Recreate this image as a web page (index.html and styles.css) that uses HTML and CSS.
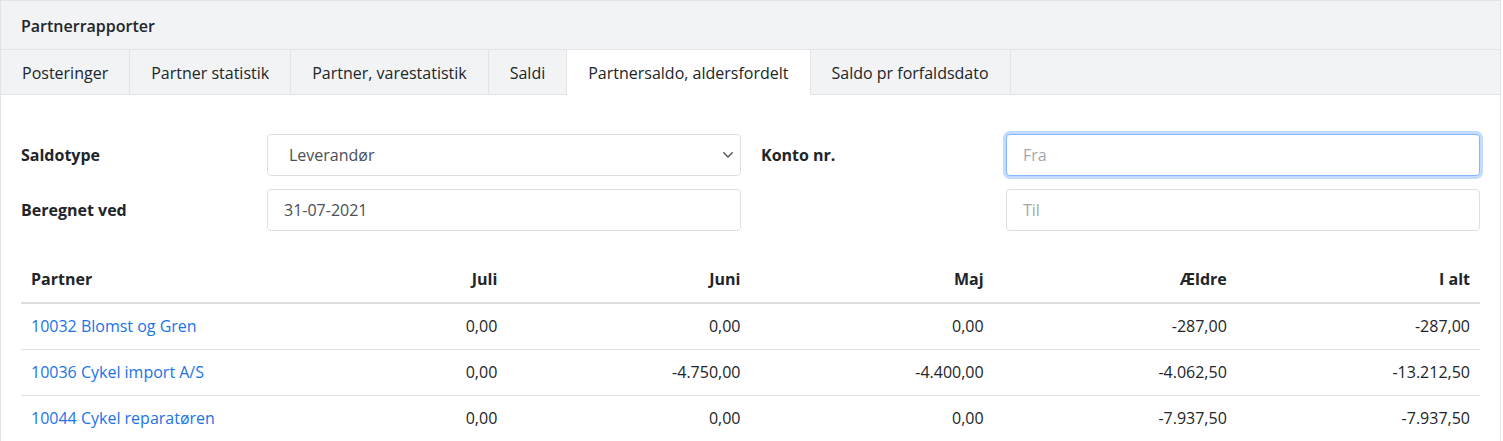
FILE: index.html
```html
<!DOCTYPE html>
<html lang="da">
<head>
<meta charset="utf-8">
<title>Partnerrapporter</title>
<link rel="stylesheet" href="styles.css">
</head>
<body>
<div class="card">
  <div class="card-header">Partnerrapporter</div>
  <nav class="tabs">
    <a class="tab" href="#">Posteringer</a>
    <a class="tab" href="#">Partner statistik</a>
    <a class="tab" href="#">Partner, varestatistik</a>
    <a class="tab" href="#">Saldi</a>
    <a class="tab active" href="#">Partnersaldo, aldersfordelt</a>
    <a class="tab" href="#">Saldo pr forfaldsdato</a>
    <span class="tab-fill"></span>
  </nav>
  <div class="card-body">
    <form class="filters">
      <label class="lbl">Saldotype</label>
      <div class="select-wrap">
        <select class="control select">
          <option>Leverandør</option>
          <option>Kunde</option>
        </select>
        <svg class="chev" width="10" height="6" viewBox="0 0 10 6"><path d="M0.8 0.8 L5 5 L9.2 0.8" fill="none" stroke="#4a4f55" stroke-width="1.3" stroke-linecap="round" stroke-linejoin="round"/></svg>
      </div>
      <label class="lbl lbl-right">Konto nr.</label>
      <input class="control focus" type="text" placeholder="Fra">

      <label class="lbl">Beregnet ved</label>
      <input class="control" type="text" value="31-07-2021">
      <span class="lbl lbl-right"></span>
      <input class="control" type="text" placeholder="Til">
    </form>

    <table class="report">
      <colgroup>
        <col class="c-col"><col class="c-col"><col class="c-col"><col class="c-col"><col class="c-col"><col class="c-col">
      </colgroup>
      <thead>
        <tr>
          <th class="left">Partner</th>
          <th>Juli</th>
          <th>Juni</th>
          <th>Maj</th>
          <th>Ældre</th>
          <th>I alt</th>
        </tr>
      </thead>
      <tbody>
        <tr>
          <td class="left"><a href="#">10032 Blomst og Gren</a></td>
          <td>0,00</td><td>0,00</td><td>0,00</td><td>-287,00</td><td>-287,00</td>
        </tr>
        <tr>
          <td class="left"><a href="#">10036 Cykel import A/S</a></td>
          <td>0,00</td><td>-4.750,00</td><td>-4.400,00</td><td>-4.062,50</td><td>-13.212,50</td>
        </tr>
        <tr>
          <td class="left"><a href="#">10044 Cykel reparatøren</a></td>
          <td>0,00</td><td>0,00</td><td>0,00</td><td>-7.937,50</td><td>-7.937,50</td>
        </tr>
      </tbody>
    </table>
  </div>
</div>
</body>
</html>
```

FILE: styles.css
```css
* { box-sizing: border-box; }
html, body {
  margin: 0;
  padding: 0;
  background: #fff;
}
body {
  font-family: "Open Sans", "Liberation Sans", Arial, sans-serif;
  font-size: 16px;
  color: #212529;
}
.card {
  width: 1501px;
  border: 1px solid #e1e3e6;
  border-bottom: none;
  background: #fff;
}
.card-header {
  height: 49px;
  background: #f2f3f5;
  border-bottom: 1px solid #e1e3e6;
  padding: 1px 20px 0 20px;
  display: flex;
  align-items: center;
  font-weight: 600;
  font-size: 16px;
  color: #212529;
}
.tabs {
  display: flex;
  height: 45px;
  background: #f2f3f5;
}
.tab {
  display: flex;
  align-items: center;
  padding: 2px 21px 0 21px;
  color: #212529;
  text-decoration: none;
  border-right: 1px solid #e1e3e6;
  border-bottom: 1px solid #e1e3e6;
  white-space: nowrap;
}
.tab.active {
  background: #fff;
  border-bottom-color: #fff;
}
.tab-fill {
  flex: 1;
  border-bottom: 1px solid #e1e3e6;
}
.card-body {
  padding: 39px 20px 0 20px;
}
.filters {
  display: grid;
  grid-template-columns: 246px 1fr 265px 1fr;
  grid-auto-rows: 42px;
  row-gap: 13px;
  align-items: center;
  margin: 0;
}
.lbl {
  font-weight: 700;
  color: #212529;
}
.lbl-right {
  padding-left: 20px;
}
.control {
  width: 100%;
  height: 42px;
  border: 1px solid #dcdfe3;
  border-radius: 4px;
  padding: 0 16px;
  font-family: inherit;
  font-size: 16px;
  color: #495057;
  background: #fff;
  outline: none;
}
.control::placeholder {
  color: #a3a7ac;
}
.control.focus {
  border-color: #86b7fe;
  box-shadow: 0 0 0 3px rgba(13, 110, 253, 0.25);
}
.select-wrap {
  position: relative;
  height: 42px;
}
.select {
  -webkit-appearance: none;
  appearance: none;
  padding-left: 21px;
}
.chev {
  position: absolute;
  right: 8px;
  top: 18px;
  pointer-events: none;
}
.report {
  width: 100%;
  margin-top: 25px;
  border-collapse: collapse;
  table-layout: fixed;
}
.c-col { width: 16.667%; }
.report th,
.report td {
  padding: 10px 10px;
  line-height: 25px;
  text-align: right;
  white-space: nowrap;
}
.report th {
  padding-top: 11px;
  font-weight: 700;
  border-bottom: 2px solid #dcdddf;
}
.report td {
  border-top: 1px solid #dfe1e3;
}
.report tbody tr:first-child td {
  border-top: none;
}
.report .left {
  text-align: left;
}
.report a {
  color: #1a73e8;
  text-decoration: none;
}
```
